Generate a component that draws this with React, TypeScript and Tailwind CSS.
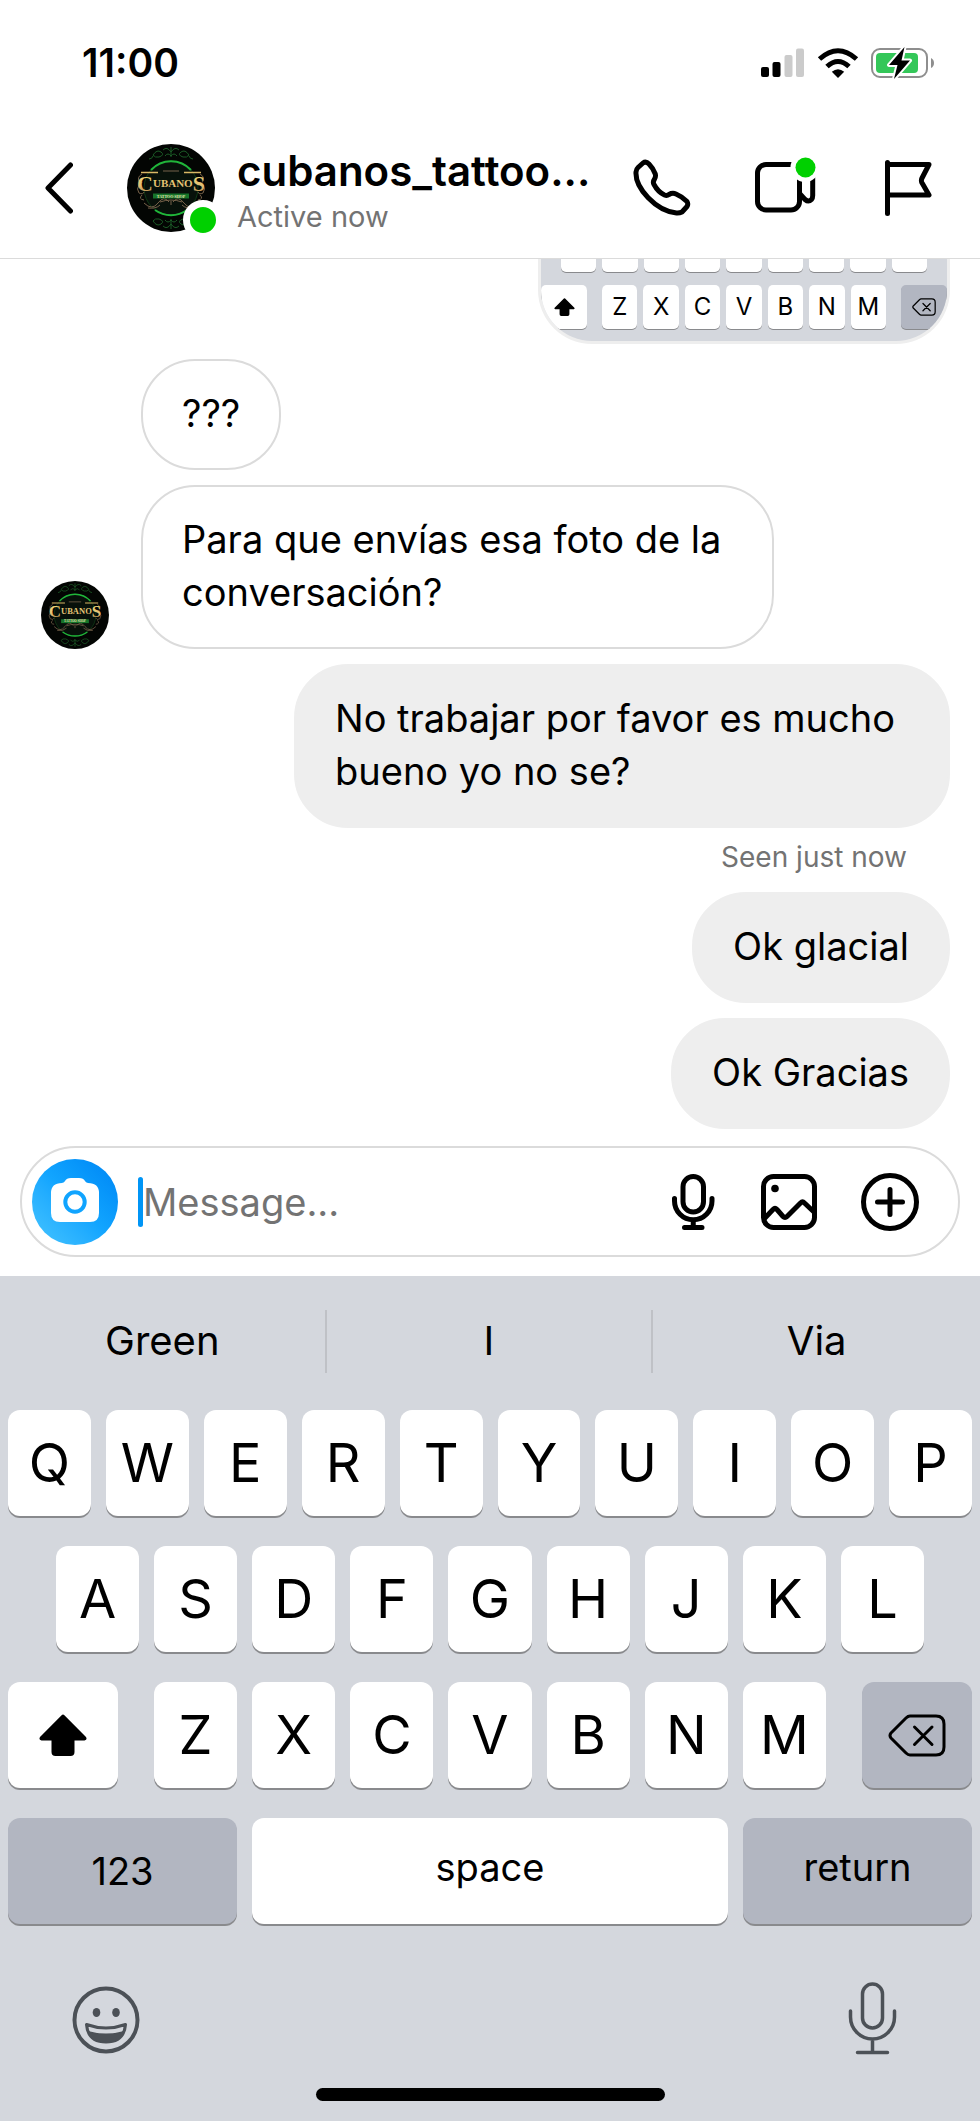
import { useId, type ReactNode } from 'react';

const suggestions = ['Green', 'I', 'Via'];
const topRow = ['Q', 'W', 'E', 'R', 'T', 'Y', 'U', 'I', 'O', 'P'];
const middleRow = ['A', 'S', 'D', 'F', 'G', 'H', 'J', 'K', 'L'];
const bottomRow = ['Z', 'X', 'C', 'V', 'B', 'N', 'M'];

function Logo({ className }: { className: string }) {
  const gold = useId();
  return (
    <svg viewBox="0 0 88 88" className={className} role="img" aria-label="Cubanos Tattoo Shop">
      <defs>
        <linearGradient id={gold} x1="0" y1="0" x2="0" y2="1">
          <stop offset="0" stopColor="#f6e27a" />
          <stop offset="0.6" stopColor="#e3bd72" />
          <stop offset="1" stopColor="#9a7442" />
        </linearGradient>
      </defs>
      <circle cx="44" cy="44" r="44" fill="#030503" />
      <circle cx="44" cy="44" r="27" fill="#07110a" stroke="#0e3a15" strokeWidth="1" />
      <g fill="none" stroke="#1b5a26" strokeWidth="1">
        <path d="M26 11q4-6 8-3t-2 5q-4 1-6-2M62 11q-4-6-8-3t2 5q4 1 6-2M36 6q4-4 8 2 4-6 8-2M44 3v10M38 12q3-4 6 0 3-4 6 0M22 15q3 0 4-3M66 15q-3 0-4-3" />
        <path d="M26 77q4 6 8 3t-2-5q-4-1-6 2M62 77q-4 6-8 3t2-5q4-1 6 2M36 82q4 4 8-2 4 6 8 2M44 85V75M38 76q3 4 6 0 3 4 6 0" />
      </g>
      <path d="M24 26a27 27 0 0 1 40 0" fill="none" stroke="#20b63a" strokeWidth="2" />
      <path d="M28 66a27 27 0 0 0 32 0" fill="none" stroke="#20b63a" strokeWidth="2" />
      <g fill="none" stroke="#77624a" strokeWidth="1">
        <path d="M15 30q-5 3-3 7t3 1M12 41q-3 4 0 8 4 2 5-1M15 51q-4 4 2 5M73 30q5 3 3 7t-3 1M76 41q3 4 0 8-4 2-5-1M73 51q4 4-2 5" />
        <path d="M17 59q8 8 14 0t11-1M71 59q-8 8-14 0t-11-1M21 64q8 1 12-3M67 64q-8 1-12-3M36 27h16M33 58q11-4 22 0M44 57v4" />
      </g>
      <text x="44" y="43" textAnchor="middle" fill={`url(#${gold})`} fontFamily="Liberation Serif, serif" fontWeight="700" fontSize="11">
        <tspan fontSize="22" dy="4">C</tspan>
        <tspan dy="-4">UBANO</tspan>
        <tspan fontSize="22" dy="4">S</tspan>
      </text>
      <path d="M14 28.500h17M57 28.500h17" stroke="#d9b765" strokeWidth="1.500" />
      <path d="M26 49.500h36v5H26z" fill="#16752a" />
      <text x="44" y="53.500" textAnchor="middle" fill="#e6e6b4" fontFamily="Liberation Serif, serif" fontWeight="700" fontSize="4">
        TATTOO SHOP
      </text>
    </svg>
  );
}

function ShiftIcon({ className }: { className: string }) {
  return (
    <svg viewBox="0 0 48 42" className={className} fill="black" aria-hidden="true">
      <path d="M22.6 1.2Q24 0 25.4 1.2L47 23q1.600 3-1.500 3.400H35.500V38q0 4-4 4h-15q-4 0-4-4V26.400H2.500Q-.6 26 1 23Z" />
    </svg>
  );
}

function DeleteIcon({ className }: { className: string }) {
  return (
    <svg viewBox="0 0 58 43" className={className} fill="none" stroke="black" strokeWidth="3" strokeLinecap="round" strokeLinejoin="round" aria-hidden="true">
      <path d="M22 2h26q8 0 8 8v23q0 8-8 8H22q-2 0-4-2L3 24q-2-2.500 0-5L18 4q2-2 4-2Z" />
      <path d="M26.500 13 44 30.500M44 13 26.500 30.500" />
    </svg>
  );
}

function StatusBar() {
  return (
    <div className="flex h-[118px] items-center justify-between pt-2 pr-[45px] pl-[82px]">
      <p className="text-[39px] leading-10 font-semibold">11:00</p>
      <div className="flex items-center gap-3" aria-hidden="true">
        <svg viewBox="0 0 44 30" className="h-[30px] w-11">
          <rect x="0" y="19" width="8" height="10" rx="2" />
          <rect x="11.500" y="14" width="8" height="15" rx="2" />
          <rect x="23.500" y="7" width="8" height="22" rx="2" fill="#cbcbcb" />
          <rect x="35" y="0.500" width="8" height="28.500" rx="2" fill="#cbcbcb" />
        </svg>
        <svg viewBox="0 0 42 30" className="h-[30px] w-[42px]">
          <path d="M21 30l-6.200-6.200q6.200-5.300 12.400 0Z" />
          <g fill="none" stroke="black" strokeWidth="5">
            <path d="M10 18.500q11-10 22 0" />
            <path d="M2.500 11Q21-5.500 39.500 11" />
          </g>
        </svg>
        <svg viewBox="0 0 64 32" className="h-8 w-16">
          <rect x="1" y="2" width="55" height="28" rx="8" fill="white" stroke="#8e8e8e" strokeWidth="2" />
          <rect x="5" y="6" width="42" height="20" rx="4" fill="#34c759" />
          <path d="M60 11q3 1.500 3 5t-3 5Z" fill="#8e8e8e" />
          <path d="M33.500 0 18 18h8.500L23 32l16-18.500h-8.500Z" fill="black" stroke="white" strokeWidth="4" strokeLinejoin="round" paintOrder="stroke" />
        </svg>
      </div>
    </div>
  );
}

function ChatHeader() {
  return (
    <div className="flex h-[140px] items-center pr-12 pl-[45px]">
      <button type="button" aria-label="Back">
        <svg viewBox="0 0 28 52" className="h-[52px] w-7" fill="none" stroke="black" strokeWidth="5" strokeLinecap="round" strokeLinejoin="round">
          <path d="M25.500 3 3 26l22.500 23" />
        </svg>
      </button>
      <div className="relative ml-[54px] shrink-0">
        <Logo className="size-[88px]" />
        <span className="absolute -right-2 -bottom-2 size-10 rounded-full border-[7px] border-white bg-[#00d000]" />
      </div>
      <div className="ml-[22px] min-w-0 flex-1 pt-2 whitespace-nowrap">
        <h1 className="text-[42px] leading-[50px] font-semibold">cubanos_tattoo...</h1>
        <p className="text-[29px] leading-[42px] text-[#737373]">Active now</p>
      </div>
      <button type="button" aria-label="Audio call">
        <svg viewBox="0 0 58 58" className="size-[58px]" fill="none" stroke="black" strokeWidth="5" strokeLinejoin="round">
          <path d="M10 4Q13 2 16 5 20 9 22.300 15q.7 3-1 5.500T21 25.500Q25 33 31.500 36q2.500 1 4.500-.5 3.500-2 7-.5 6 2.500 11 7.500 1.500 2.500 0 5L49 53q-2.500 1.200-5.500 1C23 52 2 29 3 13q.3-3 2-4.500Z" />
        </svg>
      </button>
      <button type="button" aria-label="Video call" className="ml-[63px]">
        <svg viewBox="0 0 62 58" className="h-[58px] w-[62px] overflow-visible" fill="none" stroke="black" strokeWidth="5" strokeLinejoin="round">
          <rect x="3.500" y="5.500" width="42" height="45.500" rx="8.500" />
          <path d="M46 35l5 5.500q3.500 3 6.500 0 1.200-1.500 1.200-4V8" />
          <circle cx="51" cy="8.500" r="14.500" fill="white" stroke="none" />
          <circle cx="51.500" cy="8.500" r="10" fill="#00d000" stroke="none" />
        </svg>
      </button>
      <button type="button" aria-label="Label" className="ml-[68px]">
        <svg viewBox="0 0 48 58" className="h-[58px] w-12" fill="none" stroke="black" strokeWidth="5" strokeLinecap="round" strokeLinejoin="round">
          <path d="M3.500 3.500v51M3.500 5.500h41.500l-7.200 14q-.8 2 0 4L45 36H3.500" />
        </svg>
      </button>
    </div>
  );
}

// Lower part of a shared keyboard photo, scrolled under the header
function PhotoMessage() {
  return (
    <div className="w-[412px] self-end overflow-hidden rounded-b-[54px] border-[3px] border-t-0 border-[#eeeeee] bg-[#d4d7dd]">
      <div className="flex gap-1.5 px-5">
        {middleRow.map((key) => (
          <span key={key} className="h-[13px] flex-1 rounded-b-[5px] bg-white shadow-[0_1px_0_#898a8d]" />
        ))}
      </div>
      <div className="mt-[13px] mb-3 flex h-11 gap-[15px] text-2xl">
        <span className="flex w-[46px] items-center justify-center rounded-[5px] bg-white shadow-[0_1px_0_#898a8d]">
          <ShiftIcon className="h-[18px] w-[21px]" />
        </span>
        <div className="flex flex-1 gap-1.5">
          {bottomRow.map((key) => (
            <span key={key} className="flex flex-1 items-center justify-center rounded-[5px] bg-white shadow-[0_1px_0_#898a8d]">
              {key}
            </span>
          ))}
        </div>
        <span className="flex w-[46px] items-center justify-center rounded-[5px] bg-[#b2b6c1] shadow-[0_1px_0_#898a8d]">
          <DeleteIcon className="h-[18px] w-6" />
        </span>
      </div>
    </div>
  );
}

function Bubble({ mine = false, children }: { mine?: boolean; children: ReactNode }) {
  return (
    <p
      className={
        mine
          ? 'w-fit max-w-[656px] rounded-[54px] border-2 border-[#eeeeee] bg-[#eeeeee] px-[39px] pt-[26px] pb-7'
          : 'w-fit max-w-[633px] rounded-[54px] border-2 border-[#dbdbdb] px-[39px] pt-[26px] pb-7'
      }
    >
      {children}
    </p>
  );
}

function Composer() {
  return (
    <form className="mx-5 mb-[19px] flex h-[111px] items-center rounded-full border-2 border-[#dbdbdb] pr-[38px] pl-2.5">
      <button type="button" aria-label="Camera" className="flex size-[86px] shrink-0 items-center justify-center rounded-full bg-linear-to-tr from-[#44c5ff] via-[#12a5ff] to-[#0084f4]">
        <svg viewBox="0 0 48 46" className="-mt-1 h-[46px] w-12">
          <path d="M11 6q2.500-.5 3-2Q15.500 1 20 1h8q4.500 0 6 3 .5 1.500 3 2 11 0 11 10v20q0 9-9 9H9q-9 0-9-9V16Q0 6 11 6Z" fill="white" />
          <circle cx="24" cy="25" r="9.700" fill="white" stroke="#10a4ff" strokeWidth="4" />
        </svg>
      </button>
      <span className="ml-5 h-[50px] w-[5px] rounded-sm bg-[#0095f6]" />
      <input type="text" aria-label="Message" placeholder="Message..." className="h-[60px] min-w-0 flex-1 text-[38px] outline-none placeholder:text-[#737373]" />
      <button type="button" aria-label="Record voice message">
        <svg viewBox="0 0 44 58" className="h-[58px] w-11" fill="none" stroke="black" strokeWidth="5" strokeLinecap="round">
          <rect x="12" y="3.500" width="20.500" height="35.500" rx="10.250" />
          <path d="M3.500 25.500v2.500a18.700 18.700 0 0 0 37.500 0v-2.500M22.250 47v7M13.500 54.500h17.500" />
        </svg>
      </button>
      <button type="button" aria-label="Add photo" className="ml-[45px]">
        <svg viewBox="0 0 58 58" className="size-[58px]" fill="none" stroke="black" strokeWidth="5">
          <rect x="3.500" y="3.500" width="51" height="51" rx="10" />
          <path d="M4 46l9-9.500q2-2 4 0l6 7q2 2 4 0L40.500 30q2-2 4 0L54 39" />
          <circle cx="15" cy="15.500" r="3.800" fill="black" stroke="none" />
        </svg>
      </button>
      <button type="button" aria-label="More" className="ml-[42px]">
        <svg viewBox="0 0 60 60" className="size-[60px]" fill="none" stroke="black" strokeWidth="5" strokeLinecap="round">
          <circle cx="30" cy="30" r="26.500" />
          <path d="M30 17.500v25M17.500 30h25" />
        </svg>
      </button>
    </form>
  );
}

function Key({ label }: { label: string }) {
  return (
    <button type="button" className="flex-1 rounded-xl bg-white text-[54px] leading-none shadow-[0_2px_0_#898a8d]">
      {label}
    </button>
  );
}

function Keyboard() {
  return (
    <section aria-label="Keyboard" className="bg-[#d4d7dd]">
      <div className="grid h-[134px] grid-cols-3 items-center divide-x-2 divide-[#bfc1c6] pb-1 text-[40px]">
        {suggestions.map((word) => (
          <button key={word} type="button" className="h-[63px] leading-none">
            {word}
          </button>
        ))}
      </div>
      <div className="flex flex-col gap-[30px] px-2">
        <div className="flex h-[106px] gap-[15px]">
          {topRow.map((key) => (
            <Key key={key} label={key} />
          ))}
        </div>
        <div className="flex h-[106px] gap-[15px] px-12">
          {middleRow.map((key) => (
            <Key key={key} label={key} />
          ))}
        </div>
        <div className="flex h-[106px] gap-9">
          <button type="button" aria-label="Shift" className="flex w-[110px] items-center justify-center rounded-xl bg-white shadow-[0_2px_0_#898a8d]">
            <ShiftIcon className="h-[42px] w-12" />
          </button>
          <div className="flex flex-1 gap-[15px]">
            {bottomRow.map((key) => (
              <Key key={key} label={key} />
            ))}
          </div>
          <button type="button" aria-label="Delete" className="flex w-[110px] items-center justify-center rounded-xl bg-[#b2b6c1] shadow-[0_2px_0_#898a8d]">
            <DeleteIcon className="h-[43px] w-[58px]" />
          </button>
        </div>
        <div className="flex h-[106px] gap-[15px] text-[38px] leading-none">
          <button type="button" className="w-[229px] rounded-xl bg-[#b2b6c1] shadow-[0_2px_0_#898a8d]">123</button>
          <button type="button" className="flex-1 rounded-xl bg-white pb-2 shadow-[0_2px_0_#898a8d]">space</button>
          <button type="button" className="w-[229px] rounded-xl bg-[#b2b6c1] pb-2 shadow-[0_2px_0_#898a8d]">return</button>
        </div>
      </div>
      <div className="mt-14 flex h-[76px] items-center justify-between pr-[83px] pl-[72px]">
        <button type="button" aria-label="Emoji" className="mt-1">
          <svg viewBox="0 0 68 68" className="size-[68px]" fill="none" stroke="#4c5157" strokeWidth="4">
            <circle cx="34" cy="34" r="31.500" />
            <path d="M14.500 38.500q19.500 7 39 0Q52 56 34 56T14.500 38.500Z" strokeWidth="3" strokeLinejoin="round" />
            <path d="M16 45q18 5 36 0-3 11-18 11T16 45Z" fill="#4c5157" stroke="none" />
            <ellipse cx="24.500" cy="26.500" rx="3.800" ry="4.500" fill="#4c5157" stroke="none" />
            <ellipse cx="44" cy="26.500" rx="3.800" ry="4.500" fill="#4c5157" stroke="none" />
          </svg>
        </button>
        <button type="button" aria-label="Dictate">
          <svg viewBox="0 0 49 74" className="h-[74px] w-[49px]" fill="none" stroke="#4c5157" strokeWidth="3.500" strokeLinecap="round">
            <rect x="14.500" y="3" width="20" height="44" rx="10" />
            <path d="M2.500 30v6a22 22 0 0 0 44 0v-6M24.500 58v13M9.500 71.500h30" />
          </svg>
        </button>
      </div>
      <div className="flex justify-center pt-8 pb-5">
        <span className="h-[13px] w-[349px] rounded-full bg-black" />
      </div>
    </section>
  );
}

export default function App() {
  return (
    <div className="flex min-h-screen flex-col bg-white font-[Inter,sans-serif] text-black">
      <header className="border-b border-[#dbdbdb]">
        <StatusBar />
        <ChatHeader />
      </header>
      <main className="flex flex-1 flex-col gap-[15px] pr-[30px] pb-[17px] pl-[41px] text-[38px] leading-[53px]">
        <PhotoMessage />
        <div className="flex items-end gap-8">
          <Logo className="size-[68px]" />
          <div className="flex flex-col gap-[15px]">
            <Bubble>???</Bubble>
            <Bubble>Para que envías esa foto de la conversación?</Bubble>
          </div>
        </div>
        <div className="flex flex-col items-end">
          <Bubble mine>No trabajar por favor es mucho bueno yo no se?</Bubble>
          <p className="mt-[9px] mr-[43px] text-[28px] leading-10 text-[#737373]">Seen just now</p>
        </div>
        <div className="flex flex-col items-end gap-[15px]">
          <Bubble mine>Ok glacial</Bubble>
          <Bubble mine>Ok Gracias</Bubble>
        </div>
      </main>
      <Composer />
      <Keyboard />
    </div>
  );
}
